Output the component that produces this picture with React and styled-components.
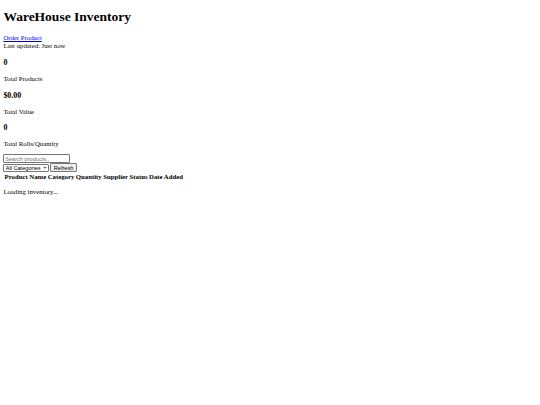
import styled, { createGlobalStyle } from 'styled-components';

// the reference is a default-styled page photographed at 1280px and shrunk to 540px
const S = 0.421875;
const px = (n) => `${(n * S).toFixed(3)}px`;

const GlobalStyle = createGlobalStyle`
  body {
    margin: ${px(8)};
    font-family: "Liberation Serif", "Times New Roman", serif;
    font-size: ${px(16)};
    line-height: ${px(18.4)};
    color: #000;
    background: #fff;
  }
`;

const Title = styled.h1`
  font-size: ${px(32)};
  line-height: ${px(36.8)};
  font-weight: bold;
  margin: ${px(14)} 0 ${px(21.44)};
`;

const OrderLink = styled.a`
  color: #0000ee;
  text-decoration: underline;
  cursor: pointer;
`;

const StatValue = styled.h3`
  font-size: ${px(18.72)};
  line-height: ${px(21.5)};
  font-weight: bold;
  margin: ${(p) => px(p.$first ? 20.5 : 18.72)} 0 ${px(18.72)};
`;

const StatLabel = styled.p`
  margin: ${px(16)} 0;
`;

const Controls = styled.div`
  margin-top: ${px(-1.5)};
`;

const ControlRow = styled.div`
  display: flex;
  gap: ${px(4)};
  align-items: center;
`;

const control = `
  font-family: "Liberation Sans", Arial, sans-serif;
  font-size: ${px(13.33)};
  line-height: normal;
  margin: 0;
  color: #000;
  box-sizing: border-box;
`;

const SearchInput = styled.input`
  ${control}
  width: ${px(159)};
  height: ${px(22)};
  padding: 0 ${px(2)};
  border: 1px solid #767676;
  border-radius: 1px;
  background: #fff;

  &::placeholder {
    color: #757575;
  }
`;

const SelectWrap = styled.span`
  position: relative;
  display: inline-flex;
`;

const CategorySelect = styled.select`
  ${control}
  appearance: none;
  width: ${px(107)};
  height: ${px(19)};
  padding: 0 0 0 ${px(3)};
  border: 1px solid #767676;
  border-radius: 1px;
  background: #fff;
`;

const Chevron = styled.svg`
  position: absolute;
  right: 2px;
  top: 50%;
  width: 4px;
  height: 3px;
  margin-top: -1.5px;
  pointer-events: none;
`;

const RefreshButton = styled.button`
  ${control}
  height: ${px(21)};
  padding: 0 ${px(6)};
  border: 1px solid #767676;
  border-radius: 1px;
  background: #efefef;
`;

const Table = styled.table`
  border-spacing: ${px(2)};
  margin-left: ${px(1)};
`;

const HeadCell = styled.th`
  padding: ${px(1)} ${px(1.8)};
  font-weight: bold;
  text-align: center;
`;

const LoadingText = styled.p`
  margin: ${px(16)} 0;
`;

const stats = [
  { value: '0', label: 'Total Products' },
  { value: '$0.00', label: 'Total Value' },
  { value: '0', label: 'Total Rolls/Quantity' },
];

const columns = ['Product Name', 'Category', 'Quantity', 'Supplier', 'Status', 'Date Added'];

function App() {
  return (
    <>
      <GlobalStyle />
      <header>
        <Title>WareHouse Inventory</Title>
        <div>
          <OrderLink href="#">Order Product</OrderLink>
        </div>
        <div>Last updated: Just now</div>
      </header>
      <section>
        {stats.map((s, i) => (
          <div key={s.label}>
            <StatValue $first={i === 0}>{s.value}</StatValue>
            <StatLabel>{s.label}</StatLabel>
          </div>
        ))}
      </section>
      <Controls>
        <ControlRow>
          <SearchInput type="text" placeholder="Search products..." />
        </ControlRow>
        <ControlRow>
          <SelectWrap>
            <CategorySelect defaultValue="all">
              <option value="all">All Categories</option>
            </CategorySelect>
            <Chevron viewBox="0 0 8 6">
              <path d="M1 1.5 L4 4.5 L7 1.5" fill="none" stroke="#000" strokeWidth="1.6" />
            </Chevron>
          </SelectWrap>
          <RefreshButton type="button">Refresh</RefreshButton>
        </ControlRow>
      </Controls>
      <Table>
        <thead>
          <tr>
            {columns.map((c) => (
              <HeadCell key={c}>{c}</HeadCell>
            ))}
          </tr>
        </thead>
        <tbody />
      </Table>
      <LoadingText>Loading inventory...</LoadingText>
    </>
  );
}

export default App;
